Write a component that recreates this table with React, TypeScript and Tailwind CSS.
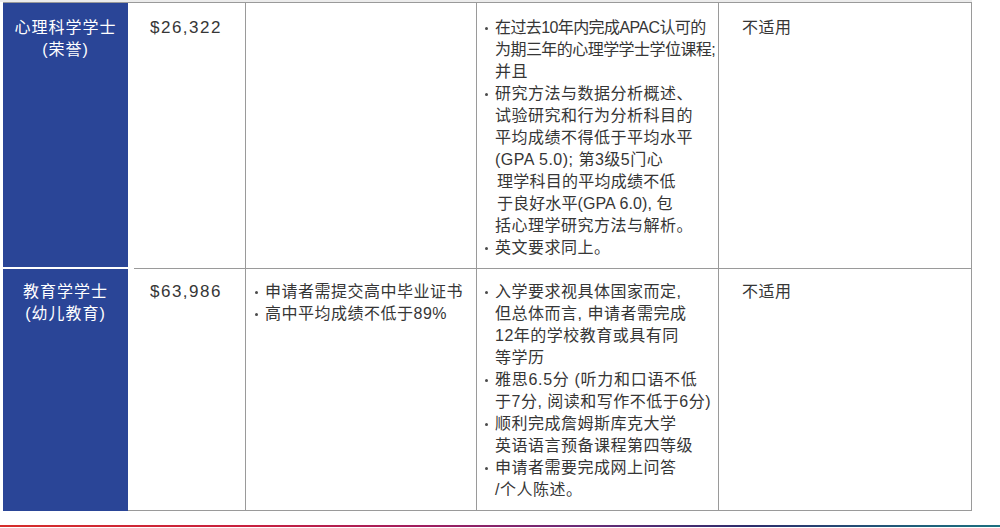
import React from "react";

type Line = { t: string; c?: string };
type Bullet = Line[];

const Dot = () => (
  <span className="w-[10px] shrink-0 pt-[10px]">
    <span className="block w-[2.5px] h-[2.5px] rounded-full bg-[#4a4a4a]" />
  </span>
);

function BulletList({ items }: { items: Bullet[] }) {
  return (
    <div className="flex flex-col">
      {items.map((b, i) => (
        <div key={i} className="flex">
          <Dot />
          <div className="flex flex-col">
            {b.map((l, j) => (
              <div key={j} className={`whitespace-nowrap ${l.c ?? "tracking-[0.5px]"}`}>
                {l.t}
              </div>
            ))}
          </div>
        </div>
      ))}
    </div>
  );
}

const row1Col4: Bullet[] = [
  [
    { t: "在过去10年内完成APAC认可的", c: "tracking-[-0.6px]" },
    { t: "为期三年的心理学学士学位课程;", c: "tracking-[-0.55px]" },
    { t: "并且" },
  ],
  [
    { t: "研究方法与数据分析概述、" },
    { t: "试验研究和行为分析科目的" },
    { t: "平均成绩不得低于平均水平" },
    { t: "(GPA 5.0); 第3级5门心", c: "tracking-[0.5px]" },
    { t: "理学科目的平均成绩不低", c: "tracking-[0.25px] pl-[2px]" },
    { t: "于良好水平(GPA 6.0), 包", c: "tracking-[0.1px] pl-[2px]" },
    { t: "括心理学研究方法与解析。" },
  ],
  [{ t: "英文要求同上。" }],
];

const row2Col3: Bullet[] = [
  [{ t: "申请者需提交高中毕业证书" }],
  [{ t: "高中平均成绩不低于89%" }],
];

const row2Col4: Bullet[] = [
  [
    { t: "入学要求视具体国家而定," },
    { t: "但总体而言, 申请者需完成" },
    { t: "12年的学校教育或具有同" },
    { t: "等学历" },
  ],
  [
    { t: "雅思6.5分 (听力和口语不低", c: "tracking-[0.7px]" },
    { t: "于7分, 阅读和写作不低于6分)", c: "tracking-[0.5px]" },
  ],
  [
    { t: "顺利完成詹姆斯库克大学" },
    { t: "英语语言预备课程第四等级" },
  ],
  [
    { t: "申请者需要完成网上问答" },
    { t: "/个人陈述。" },
  ],
];

export default function App() {
  return (
    <div className="w-[1000px] h-[528px] bg-white flex flex-col overflow-hidden text-[#363636] text-[16px] leading-[22px] font-['Liberation_Sans','Noto_Sans_CJK_SC',sans-serif]">
      <div className="h-[2px] w-[972px] bg-[#ececec]" />
      <div className="ml-[3px] w-[969px] border-t border-[#9a9a9a] flex flex-col">
        {/* Row 1 */}
        <div className="flex h-[264px]">
          <div className="w-[125px] bg-[#2a4597] text-white text-center pt-[14px] tracking-[1px]">
            <div>心理科学学士</div>
            <div>(荣誉)</div>
          </div>
          <div className="w-[118px] border-r border-[#9a9a9a] pl-[22px] pt-[14px] text-[17px] tracking-[1.5px]">
            $26,322
          </div>
          <div className="w-[231px] border-r border-[#9a9a9a]" />
          <div className="w-[242px] border-r border-[#9a9a9a] pl-[8px] pt-[14px]">
            <BulletList items={row1Col4} />
          </div>
          <div className="w-[253px] border-r border-[#9a9a9a] pl-[23px] pt-[14px] tracking-[0.5px]">
            不适用
          </div>
        </div>
        {/* Separator */}
        <div className="flex h-[2px]">
          <div className="w-[125px] bg-white" />
          <div className="w-[6px] bg-white" />
          <div className="flex-1 flex flex-col">
            <div className="h-[1px] flex">
              <div className="w-[112px] border-r border-[#9a9a9a]" />
              <div className="w-[231px] border-r border-[#9a9a9a]" />
              <div className="w-[242px] border-r border-[#9a9a9a]" />
              <div className="w-[253px] border-r border-[#9a9a9a]" />
            </div>
            <div className="h-[1px] bg-[#9a9a9a]" />
          </div>
        </div>
        {/* Row 2 */}
        <div className="flex h-[242px]">
          <div className="w-[125px] bg-[#2a4597] text-white text-center pt-[12px] tracking-[1px]">
            <div>教育学学士</div>
            <div>(幼儿教育)</div>
          </div>
          <div className="w-[118px] border-r border-b border-[#9a9a9a] pl-[22px] pt-[12px] text-[17px] tracking-[1.5px]">
            $63,986
          </div>
          <div className="w-[231px] border-r border-b border-[#9a9a9a] pl-[9px] pt-[12px]">
            <BulletList items={row2Col3} />
          </div>
          <div className="w-[242px] border-r border-b border-[#9a9a9a] pl-[8px] pt-[12px]">
            <BulletList items={row2Col4} />
          </div>
          <div className="w-[253px] border-r border-b border-[#9a9a9a] pl-[23px] pt-[12px] tracking-[0.5px]">
            不适用
          </div>
        </div>
      </div>
      <div className="mt-auto mb-[1px] h-[2px] w-full bg-[linear-gradient(90deg,#d62d2a_0%,#c8203f_25%,#a11d5f_42%,#6a2b78_58%,#2d2d6c_75%,#1f5f7a_92%,#1d7080_100%)]" />
    </div>
  );
}
